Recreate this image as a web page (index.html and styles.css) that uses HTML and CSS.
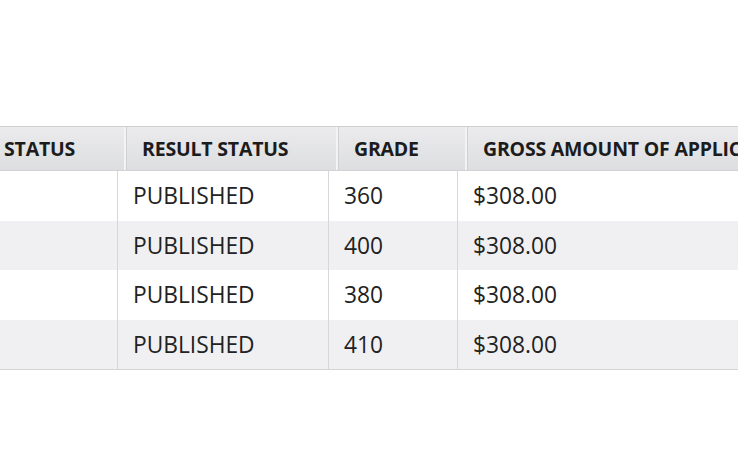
FILE: index.html
```html
<!DOCTYPE html>
<html>
<head>
<meta charset="utf-8">
<link rel="stylesheet" href="styles.css">
</head>
<body>
<div class="viewport">
  <div class="thead">
    <div class="th th-first">STATUS</div>
    <div class="th">RESULT STATUS</div>
    <div class="th">GRADE</div>
    <div class="th th-last">GROSS AMOUNT OF APPLICATION</div>
  </div>
  <div class="tbody">
    <div class="tr">
      <div class="td td-first"></div>
      <div class="td">PUBLISHED</div>
      <div class="td">360</div>
      <div class="td td-last">$308.00</div>
    </div>
    <div class="tr alt">
      <div class="td td-first"></div>
      <div class="td">PUBLISHED</div>
      <div class="td">400</div>
      <div class="td td-last">$308.00</div>
    </div>
    <div class="tr">
      <div class="td td-first"></div>
      <div class="td">PUBLISHED</div>
      <div class="td">380</div>
      <div class="td td-last">$308.00</div>
    </div>
    <div class="tr alt">
      <div class="td td-first"></div>
      <div class="td">PUBLISHED</div>
      <div class="td">410</div>
      <div class="td td-last">$308.00</div>
    </div>
  </div>
</div>
</body>
</html>
```

FILE: styles.css
```css
html, body {
  margin: 0;
  padding: 0;
  background: #ffffff;
}
body {
  font-family: "Open Sans", "Noto Sans", sans-serif;
  color: #222222;
}
.viewport {
  width: 738px;
  height: 473px;
  overflow: hidden;
  padding-top: 126px;
  box-sizing: border-box;
}
.thead {
  display: grid;
  grid-template-columns: 127px 212px 129px 420px;
  width: 888px;
  height: 45px;
  box-sizing: border-box;
  border-top: 1px solid #cfcfd2;
  border-bottom: 1px solid #d2d2d5;
  background: linear-gradient(#ebebed, #dddee0);
}
.th {
  display: flex;
  align-items: center;
  padding-left: 15px;
  font-weight: 700;
  font-size: 19.5px;
  letter-spacing: -0.2px;
  color: #1c1c1c;
  white-space: nowrap;
  overflow: hidden;
  border-right: 1px solid #d0d0d3;
  box-shadow: inset -2px 0 0 #f3f3f4;
}
.th-first {
  padding-left: 4px;
}
.th-last {
  border-right: none;
  box-shadow: none;
}
.tbody {
  width: 888px;
  border-bottom: 1px solid #d4d4d6;
}
.tr {
  display: grid;
  grid-template-columns: 118px 211px 129px 430px;
  height: 49.5px;
  background: #ffffff;
}
.tr.alt {
  background: #f0f0f2;
}
.td {
  display: flex;
  align-items: center;
  padding-left: 15px;
  font-size: 22.75px;
  color: #222222;
  white-space: nowrap;
  border-right: 1px solid #d7d7d9;
}
.td-last {
  border-right: none;
}
```
